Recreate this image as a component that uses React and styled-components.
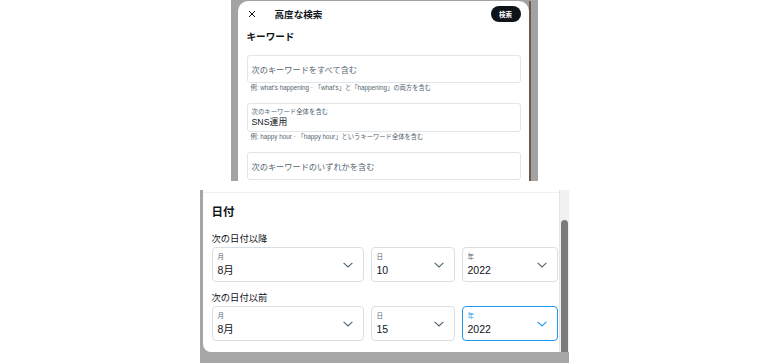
import styled, { createGlobalStyle } from "styled-components";

const GlobalStyle = createGlobalStyle`
  html, body {
    margin: 0;
    padding: 0;
    background: #ffffff;
  }
  body {
    font-family: "Liberation Sans", "Noto Sans CJK JP", sans-serif;
    color: #0f1419;
  }
`;

const Page = styled.div`
  width: 768px;
  height: 363px;
  display: flex;
  flex-direction: column;
  align-items: center;
  gap: 9px;
  overflow: hidden;
`;

/* upper screenshot */
const TopShot = styled.div`
  width: 307px;
  height: 181px;
  flex: none;
  display: flex;
  background: #a3a3a3;
  padding: 1px 7px 0 7px;
  box-sizing: border-box;
`;

const Sheet = styled.div`
  flex: 1;
  background: #ffffff;
  border-radius: 10px 10px 0 0;
  padding: 0 8px 0 9px;
  overflow: hidden;
`;

const EdgeStripe = styled.div`
  width: 2px;
  background: #6e5a48;
`;

const Header = styled.div`
  height: 25px;
  display: flex;
  align-items: center;
`;

const CloseButton = styled.div`
  width: 8px;
  height: 8px;
  margin: 0 19px 0 1px;
  display: flex;
  svg {
    display: block;
  }
`;

const Title = styled.h1`
  margin: 0;
  flex: 1;
  font-size: 9.6px;
  font-weight: 700;
`;

const SearchButton = styled.button`
  width: 30px;
  height: 16px;
  border: none;
  border-radius: 8px;
  background: #0f1419;
  color: #ffffff;
  font-family: inherit;
  font-size: 6.5px;
  font-weight: 700;
  padding: 0;
`;

const SectionTitle = styled.h2`
  margin: 0;
  font-size: 9.6px;
  font-weight: 700;
  line-height: 22px;
  height: 22px;
`;

const Field = styled.div`
  height: ${(p) => p.$h}px;
  margin-top: ${(p) => p.$mt}px;
  border: 1px solid #e1e6ea;
  border-radius: 3px;
  box-sizing: border-box;
  padding: 0 4px;
  display: flex;
  flex-direction: column;
  justify-content: center;
`;

const Placeholder = styled.span`
  font-size: 8.2px;
  color: #536471;
`;

const FieldLabel = styled.span`
  font-size: 6.4px;
  color: #536471;
  line-height: 9px;
`;

const FieldValue = styled.span`
  font-size: 8.8px;
  color: #0f1419;
  line-height: 12px;
`;

const Help = styled.div`
  font-size: 6.3px;
  color: #536471;
  line-height: 10px;
  padding-left: 4px;
  white-space: nowrap;
`;

/* lower screenshot */
const BottomShot = styled.div`
  width: 369px;
  height: 173px;
  flex: none;
  display: flex;
  flex-direction: column;
  background: #a6a6a6;
  padding-left: 3px;
  box-sizing: border-box;
`;

const BottomBody = styled.div`
  flex: 1;
  display: flex;
`;

const Panel = styled.div`
  flex: 1;
  background: #ffffff;
  border-bottom-left-radius: 8px;
  padding-left: 9px;
  display: flex;
  flex-direction: column;
`;

const TopRule = styled.div`
  height: 1px;
  margin: 2px 0 0 -9px;
  background: #eef1f3;
`;

const DateTitle = styled.h2`
  margin: 9px 0 0;
  font-size: 11.5px;
  font-weight: 700;
  line-height: 20px;
`;

const RowLabel = styled.div`
  margin-top: ${(p) => p.$mt}px;
  font-size: 9.3px;
  line-height: 16px;
  color: #0f1419;
`;

const SelectRow = styled.div`
  display: flex;
  gap: 7px;
`;

const Select = styled.div`
  width: ${(p) => p.$w}px;
  height: 35px;
  box-sizing: border-box;
  border: 1px solid ${(p) => (p.$focus ? "#1d9bf0" : "#d8dfe3")};
  border-radius: 4px;
  padding: 4px 10px 0 5px;
  display: flex;
  align-items: center;
`;

const SelectText = styled.div`
  flex: 1;
  display: flex;
  flex-direction: column;
  align-self: flex-start;
`;

const SelectLabel = styled.span`
  font-size: 6.5px;
  line-height: 10px;
  color: ${(p) => (p.$focus ? "#1d9bf0" : "#536471")};
`;

const SelectValue = styled.span`
  font-size: 10.5px;
  line-height: 16px;
  color: #0f1419;
`;

const Chevron = styled.svg`
  display: block;
  margin-top: -3px;
`;

const Scrollbar = styled.div`
  width: 10px;
  background: #f1f1f1;
  border-left: 1px solid #e4e4e4;
  box-sizing: border-box;
  display: flex;
  flex-direction: column;
  padding: 30px 1px 0 1px;
`;

const Thumb = styled.div`
  flex: 1;
  background: #7b7b7b;
  border-radius: 4px 4px 0 0;
`;

const BottomBand = styled.div`
  height: 11px;
`;

function ChevronIcon({ focus }) {
  return (
    <Chevron width="10" height="6" viewBox="0 0 10 6">
      <path
        d="M0.6 0.8 L5 5 L9.4 0.8"
        fill="none"
        stroke={focus ? "#1d9bf0" : "#536471"}
        strokeWidth="1.1"
      />
    </Chevron>
  );
}

function DateSelect({ label, value, width, focus }) {
  return (
    <Select $w={width} $focus={focus}>
      <SelectText>
        <SelectLabel $focus={focus}>{label}</SelectLabel>
        <SelectValue>{value}</SelectValue>
      </SelectText>
      <ChevronIcon focus={focus} />
    </Select>
  );
}

export default function App() {
  return (
    <>
      <GlobalStyle />
      <Page>
        <TopShot>
          <Sheet>
            <Header>
              <CloseButton>
                <svg width="8" height="8" viewBox="0 0 8 8">
                  <path d="M1 1 L7 7 M7 1 L1 7" stroke="#0f1419" strokeWidth="1" />
                </svg>
              </CloseButton>
              <Title>高度な検索</Title>
              <SearchButton>検索</SearchButton>
            </Header>
            <SectionTitle>キーワード</SectionTitle>
            <Field $h={28} $mt={7}>
              <Placeholder>次のキーワードをすべて含む</Placeholder>
            </Field>
            <Help>例: what's happening · 「what's」と「happening」の両方を含む</Help>
            <Field $h={29} $mt={10}>
              <FieldLabel>次のキーワード全体を含む</FieldLabel>
              <FieldValue>SNS運用</FieldValue>
            </Field>
            <Help>例: happy hour · 「happy hour」というキーワード全体を含む</Help>
            <Field $h={28} $mt={10}>
              <Placeholder>次のキーワードのいずれかを含む</Placeholder>
            </Field>
          </Sheet>
          <EdgeStripe />
        </TopShot>

        <BottomShot>
          <BottomBody>
            <Panel>
              <TopRule />
              <DateTitle>日付</DateTitle>
              <RowLabel $mt={9}>次の日付以降</RowLabel>
              <SelectRow>
                <DateSelect label="月" value="8月" width={152} />
                <DateSelect label="日" value="10" width={84} />
                <DateSelect label="年" value="2022" width={96} />
              </SelectRow>
              <RowLabel $mt={8}>次の日付以前</RowLabel>
              <SelectRow>
                <DateSelect label="月" value="8月" width={152} />
                <DateSelect label="日" value="15" width={84} />
                <DateSelect label="年" value="2022" width={96} focus />
              </SelectRow>
            </Panel>
            <Scrollbar>
              <Thumb />
            </Scrollbar>
          </BottomBody>
          <BottomBand />
        </BottomShot>
      </Page>
    </>
  );
}
